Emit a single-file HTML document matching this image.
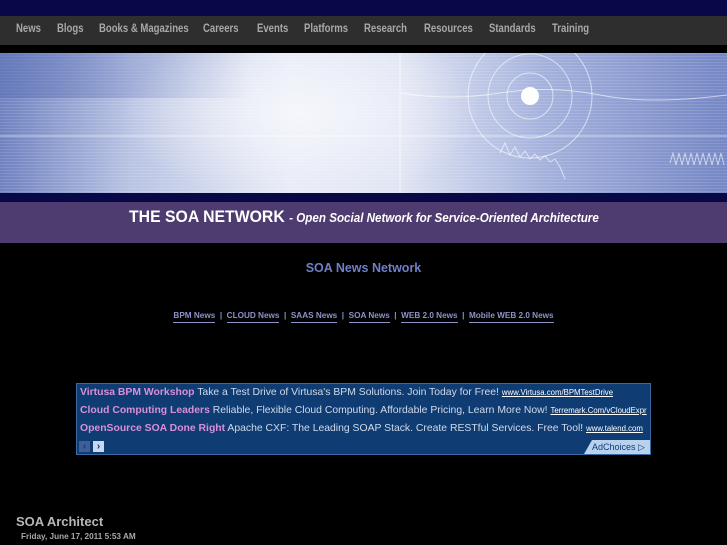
<!DOCTYPE html>
<html><head><style>
body{margin:0;width:727px;height:545px;background:#000;font-family:"Liberation Sans",sans-serif;overflow:hidden;position:relative}
.top{position:absolute;left:0;top:0;width:727px;height:16px;background:#070845}
.nav{position:absolute;left:0;top:16px;width:727px;height:29px;background:#2e2e2e}
.nav span{position:absolute;top:7px;font-size:11.5px;font-weight:bold;color:#a8a8a8;transform:scaleX(.83);transform-origin:0 0;white-space:nowrap}
.ban{position:absolute;left:0;top:53px;width:727px;height:140px;
background:radial-gradient(ellipse 180px 90px at 300px 60px,#f4f6fb,rgba(230,234,246,0) 100%),
linear-gradient(90deg,#6f82c0 0%,#b9c3e3 18%,#e6eaf6 40%,#dfe4f3 55%,#a4b1dc 75%,#7587c5 100%);}
.ban .lines{position:absolute;inset:0;background:repeating-linear-gradient(180deg,rgba(255,255,255,.12) 0 1px,transparent 1px 3px)}
.strip{position:absolute;left:0;top:193px;width:727px;height:9px;background:#070845}
.pur{position:absolute;left:0;top:202px;width:727px;height:41px;background:#4e3b70}
.pur div{position:absolute;left:129px;top:5px;color:#fff;font-size:17px;font-weight:bold;white-space:nowrap;transform:scaleX(.93);transform-origin:0 0}
.pur i{font-size:12.5px}
.snn{position:absolute;top:261px;left:0;width:727px;text-align:center;color:#6f7fc8;font-size:12.5px;font-weight:bold}
.links{position:absolute;top:311px;left:0;width:727px;text-align:center;font-size:8.2px;font-weight:bold;color:#8c92c8}
.links a{color:#8c92c8;text-decoration:none;border-bottom:1px solid #8c92c8;padding-bottom:2px}
.ad{position:absolute;left:76px;top:383px;width:573px;height:70px;background:#0f3c73;border:1px solid #3a6aa0;overflow:hidden}
.ad p{margin:0;position:absolute;left:3px;font-size:10.4px;color:#d0dae8;white-space:nowrap}
.ad b{color:#d88fd8}
.ad u{font-size:7.8px;color:#fff}
.btn{position:absolute;top:57px;width:11px;height:11px;background:#6e8fc0;color:#0f3c73;font-size:10px;line-height:11px;text-align:center;font-weight:bold}
.ac{position:absolute;right:0;bottom:0;width:66px;height:14px;background:#b8d2ee;color:#0f3c73;font-size:9px;line-height:14px;padding-left:8px;box-sizing:border-box;clip-path:polygon(8px 0,100% 0,100% 100%,0 100%)}
.h{position:absolute;left:16px;top:514px;color:#b8b8b8;font-size:13px;font-weight:bold}
.d{position:absolute;left:21px;top:532px;color:#a8a8a8;font-size:8.2px;font-weight:bold}
</style></head><body>
<div class="top"></div>
<div class="nav">
<span style="left:16px">News</span><span style="left:57px">Blogs</span><span style="left:99px">Books &amp; Magazines</span><span style="left:203px">Careers</span><span style="left:257px">Events</span><span style="left:304px">Platforms</span><span style="left:364px">Research</span><span style="left:424px">Resources</span><span style="left:489px">Standards</span><span style="left:552px">Training</span>
</div>
<div class="ban"><div class="lines"></div>
<svg width="727" height="140" style="position:absolute;left:0;top:0">
<defs><linearGradient id="g" x1="0" x2="1"><stop offset="0" stop-color="#5f74b8" stop-opacity=".6"/><stop offset="1" stop-color="#5f74b8" stop-opacity="0"/></linearGradient></defs>
<rect x="0" y="0" width="250" height="45" fill="url(#g)"/>
<g fill="none" stroke="#fff" stroke-opacity=".6">
<circle cx="530" cy="43" r="23"/><circle cx="530" cy="43" r="42"/><circle cx="530" cy="43" r="62"/>
<line x1="0" y1="83" x2="727" y2="83"/><line x1="400" y1="0" x2="400" y2="140"/>
<path d="M400 40 Q450 48 500 40 T600 42 T727 42"/>
<path d="M500 100 l5 -10 l5 12 l5 -8 l5 10 l5 -6 l5 8 l5 -5 l5 6 l5 -4 l5 6 l5 -3 l5 8 l5 12"/>
<path d="M670 110 l3 -10 l3 12 l3 -12 l3 12 l3 -12 l3 12 l3 -12 l3 12 l3 -12 l3 12 l3 -12 l3 12 l3 -12 l3 12 l3 -12 l3 12 l3 -12 l3 12"/>
</g>
<circle cx="530" cy="43" r="9" fill="#fff"/>
</svg></div>
<div class="strip"></div>
<div class="pur"><div>THE SOA NETWORK <i>- Open Social Network for Service-Oriented Architecture</i></div></div>
<div class="snn">SOA News Network</div>
<div class="links"><a>BPM News</a> &nbsp;|&nbsp; <a>CLOUD News</a> &nbsp;|&nbsp; <a>SAAS News</a> &nbsp;|&nbsp; <a>SOA News</a> &nbsp;|&nbsp; <a>WEB 2.0 News</a> &nbsp;|&nbsp; <a>Mobile WEB 2.0 News</a></div>
<div class="ad">
<p style="top:3px"><b>Virtusa BPM Workshop</b> Take a Test Drive of Virtusa's BPM Solutions. Join Today for Free! <u>www.Virtusa.com/BPMTestDrive</u></p>
<p style="top:21px"><b>Cloud Computing Leaders</b> Reliable, Flexible Cloud Computing. Affordable Pricing, Learn More Now! <u>Terremark.Com/vCloudExpr</u></p>
<p style="top:39px"><b>OpenSource SOA Done Right</b> Apache CXF: The Leading SOAP Stack. Create RESTful Services. Free Tool! <u>www.talend.com</u></p>
<div class="btn" style="left:2px;background:#3e5f95">‹</div><div class="btn" style="left:16px;background:#c8d8f0">›</div>
<div class="ac">AdChoices ▷</div>
</div>
<div class="h">SOA Architect</div>
<div class="d">Friday, June 17, 2011 5:53 AM</div>
</body></html>
